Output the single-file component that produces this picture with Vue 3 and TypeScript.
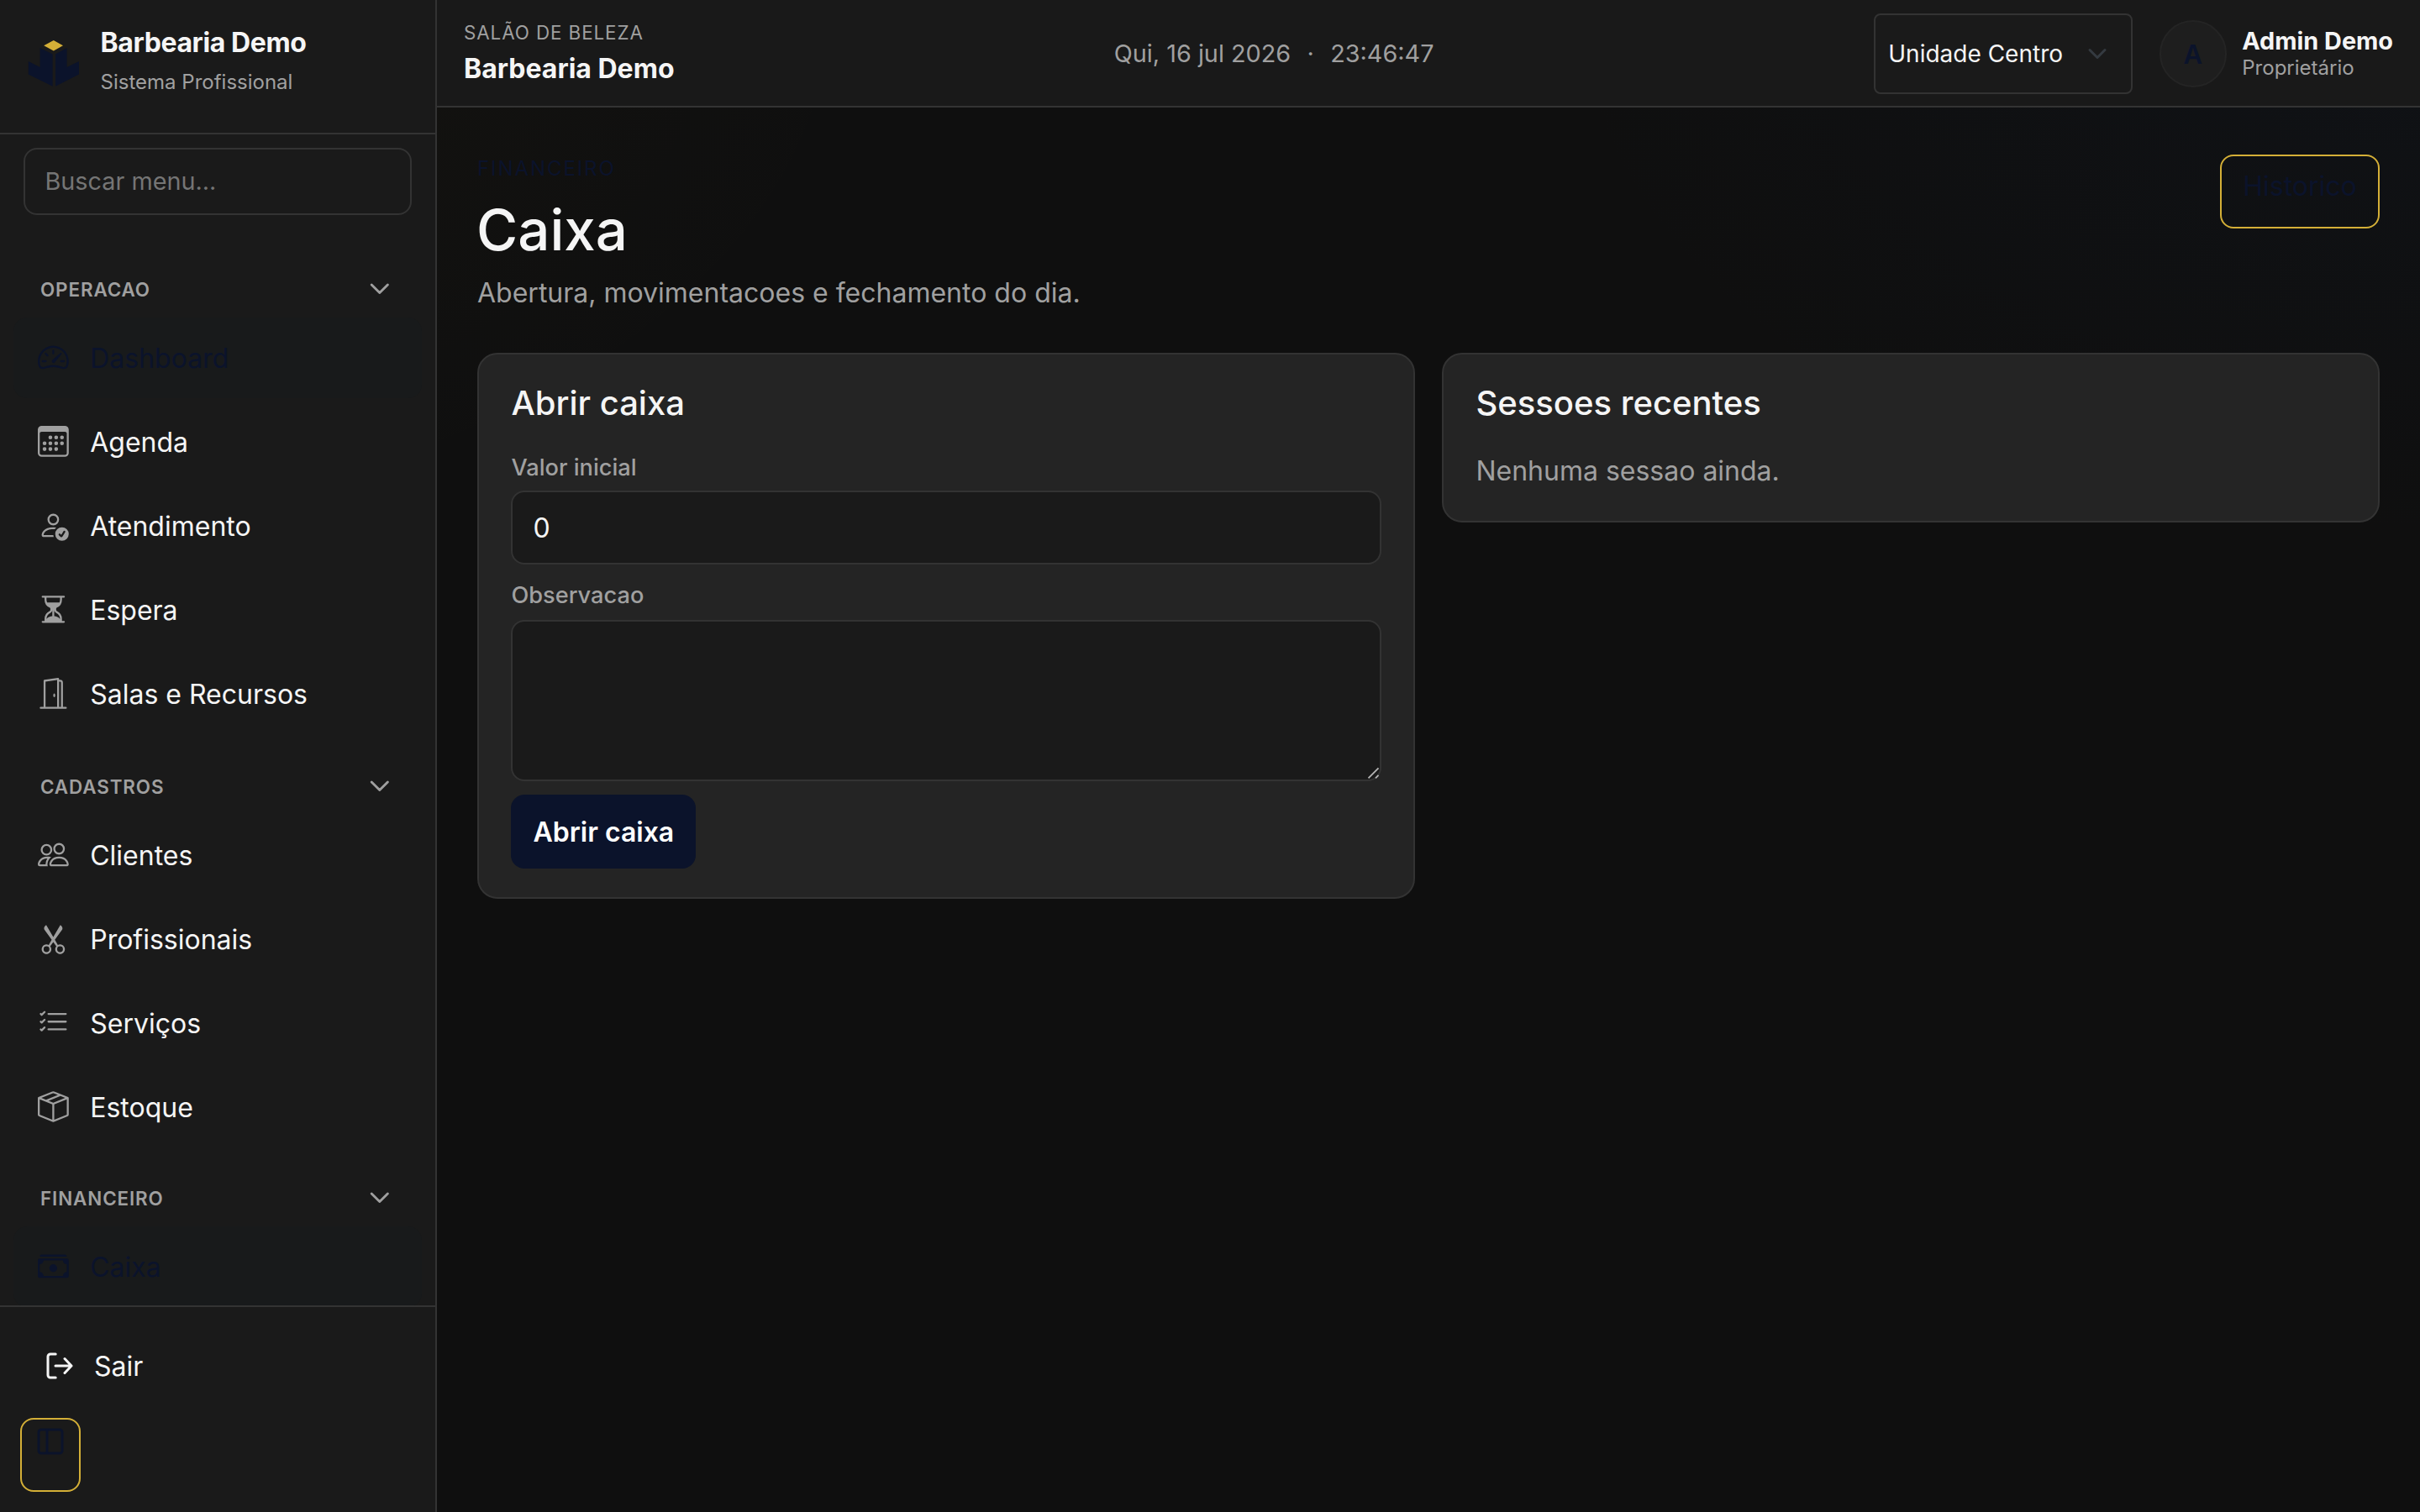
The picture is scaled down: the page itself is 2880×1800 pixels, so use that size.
<script setup lang="ts">
interface MenuItem {
  label: string
  icon: string
  active?: boolean
}
interface MenuGroup {
  title: string
  items: MenuItem[]
}

const icons: Record<string, string[]> = {
  speedometer: [
    'M8 4a.5.5 0 0 1 .5.5V6a.5.5 0 0 1-1 0V4.5A.5.5 0 0 1 8 4M3.732 5.732a.5.5 0 0 1 .707 0l.915.914a.5.5 0 1 1-.708.708l-.914-.915a.5.5 0 0 1 0-.707M2 10a.5.5 0 0 1 .5-.5h1.586a.5.5 0 0 1 0 1H2.5A.5.5 0 0 1 2 10m9.5 0a.5.5 0 0 1 .5-.5h1.5a.5.5 0 0 1 0 1H12a.5.5 0 0 1-.5-.5m.754-4.246a.39.39 0 0 0-.527-.02L7.547 9.31a.91.91 0 1 0 1.302 1.258l3.434-4.297a.39.39 0 0 0-.029-.518z',
    'M0 10a8 8 0 1 1 15.547 2.661c-.442 1.253-1.845 1.602-2.932 1.25C11.309 13.488 9.475 13 8 13c-1.474 0-3.31.488-4.615.911-1.087.352-2.49.003-2.932-1.25A8 8 0 0 1 0 10m8-7a7 7 0 0 0-6.603 9.329c.203.575.923.876 1.68.63C4.397 12.533 6.358 12 8 12s3.604.532 4.923.96c.757.245 1.477-.056 1.68-.631A7 7 0 0 0 8 3',
  ],
  calendar: [
    'M14 0H2a2 2 0 0 0-2 2v12a2 2 0 0 0 2 2h12a2 2 0 0 0 2-2V2a2 2 0 0 0-2-2M1 3.857C1 3.384 1.448 3 2 3h12c.552 0 1 .384 1 .857v10.286c0 .473-.448.857-1 .857H2c-.552 0-1-.384-1-.857z',
    'M6.5 7a1 1 0 1 0 0-2 1 1 0 0 0 0 2m3 0a1 1 0 1 0 0-2 1 1 0 0 0 0 2m3 0a1 1 0 1 0 0-2 1 1 0 0 0 0 2m-9 3a1 1 0 1 0 0-2 1 1 0 0 0 0 2m3 0a1 1 0 1 0 0-2 1 1 0 0 0 0 2m3 0a1 1 0 1 0 0-2 1 1 0 0 0 0 2m3 0a1 1 0 1 0 0-2 1 1 0 0 0 0 2m-9 3a1 1 0 1 0 0-2 1 1 0 0 0 0 2m3 0a1 1 0 1 0 0-2 1 1 0 0 0 0 2m3 0a1 1 0 1 0 0-2 1 1 0 0 0 0 2',
  ],
  personCheck: [
    'M12.5 16a3.5 3.5 0 1 0 0-7 3.5 3.5 0 0 0 0 7m1.679-4.493-1.335 2.226a.75.75 0 0 1-1.174.144l-.774-.773a.5.5 0 0 1 .708-.708l.547.548 1.17-1.951a.5.5 0 1 1 .858.514M11 5a3 3 0 1 1-6 0 3 3 0 0 1 6 0M8 7a2 2 0 1 0 0-4 2 2 0 0 0 0 4',
    'M8.256 14a4.5 4.5 0 0 1-.229-1.004H3c.001-.246.154-.986.832-1.664C4.484 10.68 5.711 10 8 10q.39 0 .74.025c.226-.341.496-.65.804-.918Q8.844 9.002 8 9c-5 0-6 3-6 4s1 1 1 1z',
  ],
  hourglass: [
    'M2.5 15a.5.5 0 1 1 0-1h1v-1a4.5 4.5 0 0 1 2.557-4.06c.29-.139.443-.377.443-.59v-.7c0-.213-.154-.451-.443-.59A4.5 4.5 0 0 1 3.5 3V2h-1a.5.5 0 0 1 0-1h11a.5.5 0 0 1 0 1h-1v1a4.5 4.5 0 0 1-2.557 4.06c-.29.139-.443.377-.443.59v.7c0 .213.154.451.443.59A4.5 4.5 0 0 1 12.5 13v1h1a.5.5 0 0 1 0 1zm2-13v1c0 .537.12 1.045.337 1.5h6.326c.216-.455.337-.963.337-1.5V2zm3 6.35c0 .701-.478 1.236-1.011 1.492A3.5 3.5 0 0 0 4.5 13s.866-1.299 3-1.48zm1 0v3.17c2.134.181 3 1.48 3 1.48a3.5 3.5 0 0 0-1.989-3.158C8.978 9.586 8.5 9.052 8.5 8.351z',
  ],
  door: [
    'M8.5 10c-.276 0-.5-.448-.5-1s.224-1 .5-1 .5.448.5 1-.224 1-.5 1',
    'M10.828.122A.5.5 0 0 1 11 .5V1h.5A1.5 1.5 0 0 1 13 2.5V15h1.5a.5.5 0 0 1 0 1h-13a.5.5 0 0 1 0-1H3V1.5a.5.5 0 0 1 .43-.495l7-1a.5.5 0 0 1 .398.117M11.5 2H11v13h1V2.5a.5.5 0 0 0-.5-.5M4 1.934V15h6V1.077z',
  ],
  people: [
    'M15 14s1 0 1-1-1-4-5-4-5 3-5 4 1 1 1 1zm-7.978-1L7 12.996c.001-.264.167-1.03.76-1.72C8.312 10.629 9.282 10 11 10c1.717 0 2.687.63 3.24 1.276.593.69.758 1.457.76 1.72l-.008.002-.014.002zM11 7a2 2 0 1 0 0-4 2 2 0 0 0 0 4m3-2a3 3 0 1 1-6 0 3 3 0 0 1 6 0M6.936 9.28a6 6 0 0 0-1.23-.247A7 7 0 0 0 5 9c-4 0-5 3-5 4q0 1 1 1h4.216A2.24 2.24 0 0 1 5 13c0-1.01.377-2.042 1.09-2.904.243-.294.526-.569.846-.816M4.92 10A5.5 5.5 0 0 0 4 13H1c0-.26.164-1.03.76-1.724.545-.636 1.492-1.256 3.16-1.275ZM1.5 5.5a3 3 0 1 1 6 0 3 3 0 0 1-6 0m3-2a2 2 0 1 0 0 4 2 2 0 0 0 0-4',
  ],
  scissors: [
    'M3.5 3.5c-.614-.884-.074-1.962.858-2.5L8 7.226 11.642 1c.932.538 1.472 1.616.858 2.5L8.81 8.61l1.556 2.661a2.5 2.5 0 1 1-.794.637L8 9.73l-1.572 2.177a2.5 2.5 0 1 1-.794-.637L7.19 8.61zm2.5 10a1.5 1.5 0 1 0-3 0 1.5 1.5 0 0 0 3 0m7 0a1.5 1.5 0 1 0-3 0 1.5 1.5 0 0 0 3 0',
  ],
  listCheck: [
    'M5 11.5a.5.5 0 0 1 .5-.5h9a.5.5 0 0 1 0 1h-9a.5.5 0 0 1-.5-.5m0-4a.5.5 0 0 1 .5-.5h9a.5.5 0 0 1 0 1h-9a.5.5 0 0 1-.5-.5m0-4a.5.5 0 0 1 .5-.5h9a.5.5 0 0 1 0 1h-9a.5.5 0 0 1-.5-.5M3.854 2.146a.5.5 0 0 1 0 .708l-1.5 1.5a.5.5 0 0 1-.708 0l-.5-.5a.5.5 0 1 1 .708-.708L2 3.293l1.146-1.147a.5.5 0 0 1 .708 0m0 4a.5.5 0 0 1 0 .708l-1.5 1.5a.5.5 0 0 1-.708 0l-.5-.5a.5.5 0 1 1 .708-.708L2 7.293l1.146-1.147a.5.5 0 0 1 .708 0m0 4a.5.5 0 0 1 0 .708l-1.5 1.5a.5.5 0 0 1-.708 0l-.5-.5a.5.5 0 0 1 .708-.708l.146.147 1.146-1.147a.5.5 0 0 1 .708 0',
  ],
  box: [
    'M8.186 1.113a.5.5 0 0 0-.372 0L1.846 3.5l2.404.961L10.404 2zm3.564 1.426L5.596 5 8 5.961 14.154 3.5zm3.25 1.7-6.5 2.6v7.922l6.5-2.6V4.24zM7.5 14.762V6.838L1 4.239v7.923zM7.443.184a1.5 1.5 0 0 1 1.114 0l7.129 2.852A.5.5 0 0 1 16 3.5v8.662a1 1 0 0 1-.629.928l-7.185 2.874a.5.5 0 0 1-.372 0L.63 13.09a1 1 0 0 1-.63-.928V3.5a.5.5 0 0 1 .314-.464z',
  ],
  cash: [
    'M1 3a1 1 0 0 1 1-1h12a1 1 0 0 1 1 1zm7 8a2 2 0 1 0 0-4 2 2 0 0 0 0 4',
    'M0 5a1 1 0 0 1 1-1h14a1 1 0 0 1 1 1v8a1 1 0 0 1-1 1H1a1 1 0 0 1-1-1zm3 0a2 2 0 0 1-2 2v4a2 2 0 0 1 2 2h10a2 2 0 0 1 2-2V7a2 2 0 0 1-2-2z',
  ],
}

const groups: MenuGroup[] = [
  {
    title: 'OPERACAO',
    items: [
      { label: 'Dashboard', icon: 'speedometer', active: true },
      { label: 'Agenda', icon: 'calendar' },
      { label: 'Atendimento', icon: 'personCheck' },
      { label: 'Espera', icon: 'hourglass' },
      { label: 'Salas e Recursos', icon: 'door' },
    ],
  },
  {
    title: 'CADASTROS',
    items: [
      { label: 'Clientes', icon: 'people' },
      { label: 'Profissionais', icon: 'scissors' },
      { label: 'Serviços', icon: 'listCheck' },
      { label: 'Estoque', icon: 'box' },
    ],
  },
  {
    title: 'FINANCEIRO',
    items: [{ label: 'Caixa', icon: 'cash', active: true }],
  },
]
</script>

<template>
  <div class="app">
    <aside class="sidebar">
      <div class="brand">
        <svg class="logo" viewBox="0 0 64 64">
          <path fill="#d4af37" d="M31.8 4 43 10.2 31.8 16.4 20.2 10.2z" />
          <path fill="#0b132b" d="M15.6 13 30.6 20.5V58.8L1.8 44.5V29L15.6 36z" />
          <path fill="#0b132b" d="M47.6 13 34 20.5V58.8L62 44.5V29L47.6 36z" />
        </svg>
        <div class="brand-text">
          <strong>Barbearia Demo</strong>
          <span>Sistema Profissional</span>
        </div>
      </div>

      <div class="search"><input type="text" placeholder="Buscar menu..." /></div>

      <nav class="menu">
        <section v-for="g in groups" :key="g.title" class="group">
          <div class="group-head">
            <span>{{ g.title }}</span>
            <svg viewBox="0 0 16 16">
              <path
                d="M1.646 4.646a.5.5 0 0 1 .708 0L8 10.293l5.646-5.647a.5.5 0 0 1 .708.708l-6 6a.5.5 0 0 1-.708 0l-6-6a.5.5 0 0 1 0-.708"
              />
            </svg>
          </div>
          <a v-for="i in g.items" :key="i.label" class="item" :class="{ active: i.active }">
            <svg viewBox="0 0 16 16">
              <path v-for="(d, n) in icons[i.icon]" :key="n" :d="d" />
            </svg>
            <span>{{ i.label }}</span>
          </a>
        </section>
      </nav>

      <div class="side-foot">
        <a class="logout">
          <svg viewBox="0 0 32 32" fill="none" stroke="currentColor" stroke-width="3" stroke-linecap="round" stroke-linejoin="round">
            <path d="M11.2 2H5a3 3 0 0 0-3 3v22a3 3 0 0 0 3 3h6.2" />
            <path d="M11 16h19M22 7.5 30 16l-8 8.5" />
          </svg>
          <span>Sair</span>
        </a>
        <button class="toggle" type="button">
          <svg viewBox="0 0 32 32" fill="none" stroke="currentColor" stroke-width="3">
            <rect x="2" y="2" width="28" height="28" rx="3" />
            <path d="M12 2v28" />
          </svg>
        </button>
      </div>
    </aside>

    <div class="page">
      <header class="topbar">
        <div class="tenant">
          <small>SALÃO DE BELEZA</small>
          <strong>Barbearia Demo</strong>
        </div>
        <div class="clock">Qui, 16 jul 2026 &nbsp;<span class="dot">·</span>&nbsp; 23:46:47</div>
        <div class="right">
          <div class="select">
            <span>Unidade Centro</span>
            <svg viewBox="0 0 16 16">
              <path d="m2 5 6 6 6-6" fill="none" stroke="#343a40" stroke-width="2" stroke-linecap="round" stroke-linejoin="round" />
            </svg>
          </div>
          <div class="avatar">A</div>
          <div class="user">
            <strong>Admin Demo</strong>
            <span>Proprietário</span>
          </div>
        </div>
      </header>

      <main class="main">
        <div class="head">
          <div>
            <div class="eyebrow">FINANCEIRO</div>
            <h1>Caixa</h1>
            <p>Abertura, movimentacoes e fechamento do dia.</p>
          </div>
          <a class="history">Historico</a>
        </div>

        <div class="cards">
          <section class="card">
            <h2>Abrir caixa</h2>
            <label>Valor inicial</label>
            <input class="field" type="text" value="0" />
            <label class="second">Observacao</label>
            <div class="area">
              <textarea class="field"></textarea>
              <svg class="grip" viewBox="0 0 16 16" fill="none" stroke="#b4b4b4" stroke-width="1.8">
                <path d="M1.5 14.3 13.5 2.3M10 14.3l3.5-3.5" />
              </svg>
            </div>
            <button class="primary" type="button">Abrir caixa</button>
          </section>
          <section class="card">
            <h2>Sessoes recentes</h2>
            <p>Nenhuma sessao ainda.</p>
          </section>
        </div>
      </main>
    </div>
  </div>
</template>

<style>
html,
body {
  margin: 0;
  background: #0f0f0f;
}
</style>

<style scoped>
* {
  box-sizing: border-box;
}
.app {
  display: flex;
  width: 2880px;
  height: 1800px;
  overflow: hidden;
  font-family: Inter, 'Liberation Sans', sans-serif;
  font-size: 32px;
  color: #f5f5f5;
  background:
    radial-gradient(ellipse at top left, rgba(212, 175, 55, 0.03), transparent 26%),
    radial-gradient(ellipse at top right, rgba(20, 44, 84, 0.1), transparent 25%),
    #0f0f0f;
}
input,
textarea,
button {
  font-family: inherit;
  margin: 0;
}

/* sidebar */
.sidebar {
  display: flex;
  flex-direction: column;
  flex: none;
  width: 520px;
  background: #1a1a1a;
  border-right: 2px solid #333;
}
.brand {
  display: flex;
  flex: none;
  height: 160px;
  padding: 32px 0 0 32px;
  border-bottom: 2px solid #333;
}
.logo {
  width: 64px;
  height: 64px;
  margin: 12px 23.6px 0 0;
}
.brand-text strong,
.brand-text span {
  display: block;
}
.brand-text strong {
  font-size: 32px;
  line-height: 38px;
  font-weight: 700;
  letter-spacing: -0.4px;
}
.brand-text span {
  margin-top: 12px;
  font-size: 24px;
  line-height: 32px;
  color: #a0a0a0;
}
.search {
  flex: none;
  padding: 16px 28px 0;
}
.search input {
  display: block;
  width: 462px;
  height: 80px;
  padding: 0 24px 2px 23.5px;
  border: 2px solid #333;
  border-radius: 16px;
  background: transparent;
  font-size: 28.8px;
  color: #f5f5f5;
}
.search input::placeholder {
  color: #757575;
  opacity: 1;
}
.menu {
  flex: 1;
  min-height: 0;
  overflow: hidden;
  padding: 53px 16px 0;
}
.group {
  display: flow-root;
}
.group + .group {
  margin-top: 23px;
}
.group + .group:last-child {
  margin-top: 21px;
}
.group-head {
  display: flex;
  align-items: center;
  justify-content: space-between;
  height: 69px;
  padding: 1px 37px 0 32px;
  font-size: 22.4px;
  font-weight: 600;
  letter-spacing: 0.9px;
  color: #a0a0a0;
}
.group-head svg {
  width: 25.6px;
  height: 25.6px;
  fill: currentColor;
  stroke: currentColor;
  stroke-width: 0.8;
}
.item {
  display: flex;
  align-items: center;
  height: 96px;
  margin-bottom: 4px;
  padding-left: 28.8px;
  border-radius: 16px;
}
.item svg {
  width: 36.8px;
  height: 36.8px;
  margin: 0 25.6px 1px 0;
  fill: #a0a0a0;
}
.item.active {
  color: #0b132b;
  background: rgba(11, 30, 43, 0.1);
}
.item.active svg {
  fill: #0b132b;
}
.side-foot {
  flex: none;
  height: 246px;
  padding: 24px;
  border-top: 2px solid #333;
}
.logout {
  display: flex;
  align-items: center;
  height: 92px;
  padding-left: 31px;
}
.logout svg {
  width: 32px;
  height: 32px;
  margin-right: 25px;
}
.toggle {
  display: flex;
  justify-content: center;
  width: 72px;
  height: 88px;
  margin-top: 16px;
  padding: 10px 0 0;
  border: 2px solid #d4af37;
  border-radius: 16px;
  background: transparent;
  color: #0b132b;
}
.toggle svg {
  width: 32px;
  height: 32px;
}

/* top bar */
.page {
  flex: 1;
  min-width: 0;
}
.topbar {
  display: flex;
  align-items: center;
  justify-content: space-between;
  height: 128px;
  padding: 0 32px;
  background: rgba(26, 26, 26, 0.96);
  border-bottom: 2px solid #333;
}
.tenant small,
.tenant strong,
.user strong,
.user span {
  display: block;
}
.tenant small {
  font-size: 22.4px;
  line-height: 26px;
  letter-spacing: 0.9px;
  color: #a0a0a0;
}
.tenant strong {
  margin-top: 11px;
  line-height: 38px;
  font-weight: 700;
}
.clock {
  font-size: 28.8px;
  color: #a0a0a0;
}
.dot {
  margin: 0 3.2px;
}
.right {
  display: flex;
  align-items: center;
}
.select {
  display: flex;
  align-items: center;
  justify-content: space-between;
  width: 308px;
  height: 96px;
  margin-top: 2px;
  padding: 0 24px 0 15.5px;
  border: 2px solid #333;
  border-radius: 8px;
  background: #1a1a1a;
  font-size: 28px;
}
.select svg {
  width: 32px;
  height: 24px;
}
.avatar {
  display: flex;
  align-items: center;
  justify-content: center;
  width: 80px;
  height: 80px;
  margin: 2px 18.5px 0 32px;
  border: 2px solid #242424;
  border-radius: 50%;
  background: #1e1e1e;
  color: #0b132b;
  font-size: 31px;
  font-weight: 600;
}
.user strong {
  font-size: 28.8px;
  line-height: 34px;
  font-weight: 700;
}
.user span {
  margin-top: 1px;
  font-size: 24px;
  line-height: 28px;
  color: #a0a0a0;
}

/* content */
.main {
  padding: 56px 48px 0;
}
.head {
  display: flex;
  align-items: flex-start;
  justify-content: space-between;
}
.eyebrow {
  font-size: 24px;
  line-height: 34px;
  letter-spacing: 1.92px;
  color: #0b132b;
}
h1 {
  margin: 16px 0 0 -1px;
  font-size: 67.2px;
  line-height: 80px;
  font-weight: 500;
}
.head p {
  margin: 11px 0 0;
  line-height: 48px;
  color: #a0a0a0;
}
.history {
  width: 190px;
  height: 88px;
  padding-top: 12px;
  border: 2px solid #d4af37;
  border-radius: 16px;
  font-size: 32px;
  line-height: 48px;
  text-align: center;
  color: #0b132b;
}
.cards {
  display: grid;
  grid-template-columns: 1fr 1fr;
  gap: 32px;
  align-items: start;
  margin-top: 47px;
}
.card {
  padding: 34px 38.4px;
  border: 2px solid #333;
  border-radius: 24px;
  background: #242424;
}
h2 {
  margin: 0;
  font-size: 40px;
  line-height: 48px;
  font-weight: 500;
}
.card p {
  margin: 31px 0 0;
  line-height: 51px;
  color: #a0a0a0;
}
label {
  display: block;
  margin: 35px 0 9px;
  font-size: 27.2px;
  line-height: 36px;
  font-weight: 500;
  color: #a0a0a0;
}
label.second {
  margin: 19px 0 11px;
}
.field {
  display: block;
  width: 100%;
  height: 88px;
  padding: 0 24px;
  border: 2px solid #333;
  border-radius: 16px;
  background: #1a1a1a;
  color: #f5f5f5;
  font-size: 32px;
}
.area {
  position: relative;
}
textarea.field {
  height: 192px;
  resize: none;
}
.grip {
  position: absolute;
  right: 1px;
  bottom: 2px;
  width: 16px;
  height: 16px;
}
.primary {
  display: block;
  width: 220px;
  height: 88px;
  margin-top: 16px;
  padding: 0;
  border: 0;
  border-radius: 16px;
  background: #0b132b;
  color: #fff;
  font-size: 32px;
  font-weight: 600;
}
</style>
